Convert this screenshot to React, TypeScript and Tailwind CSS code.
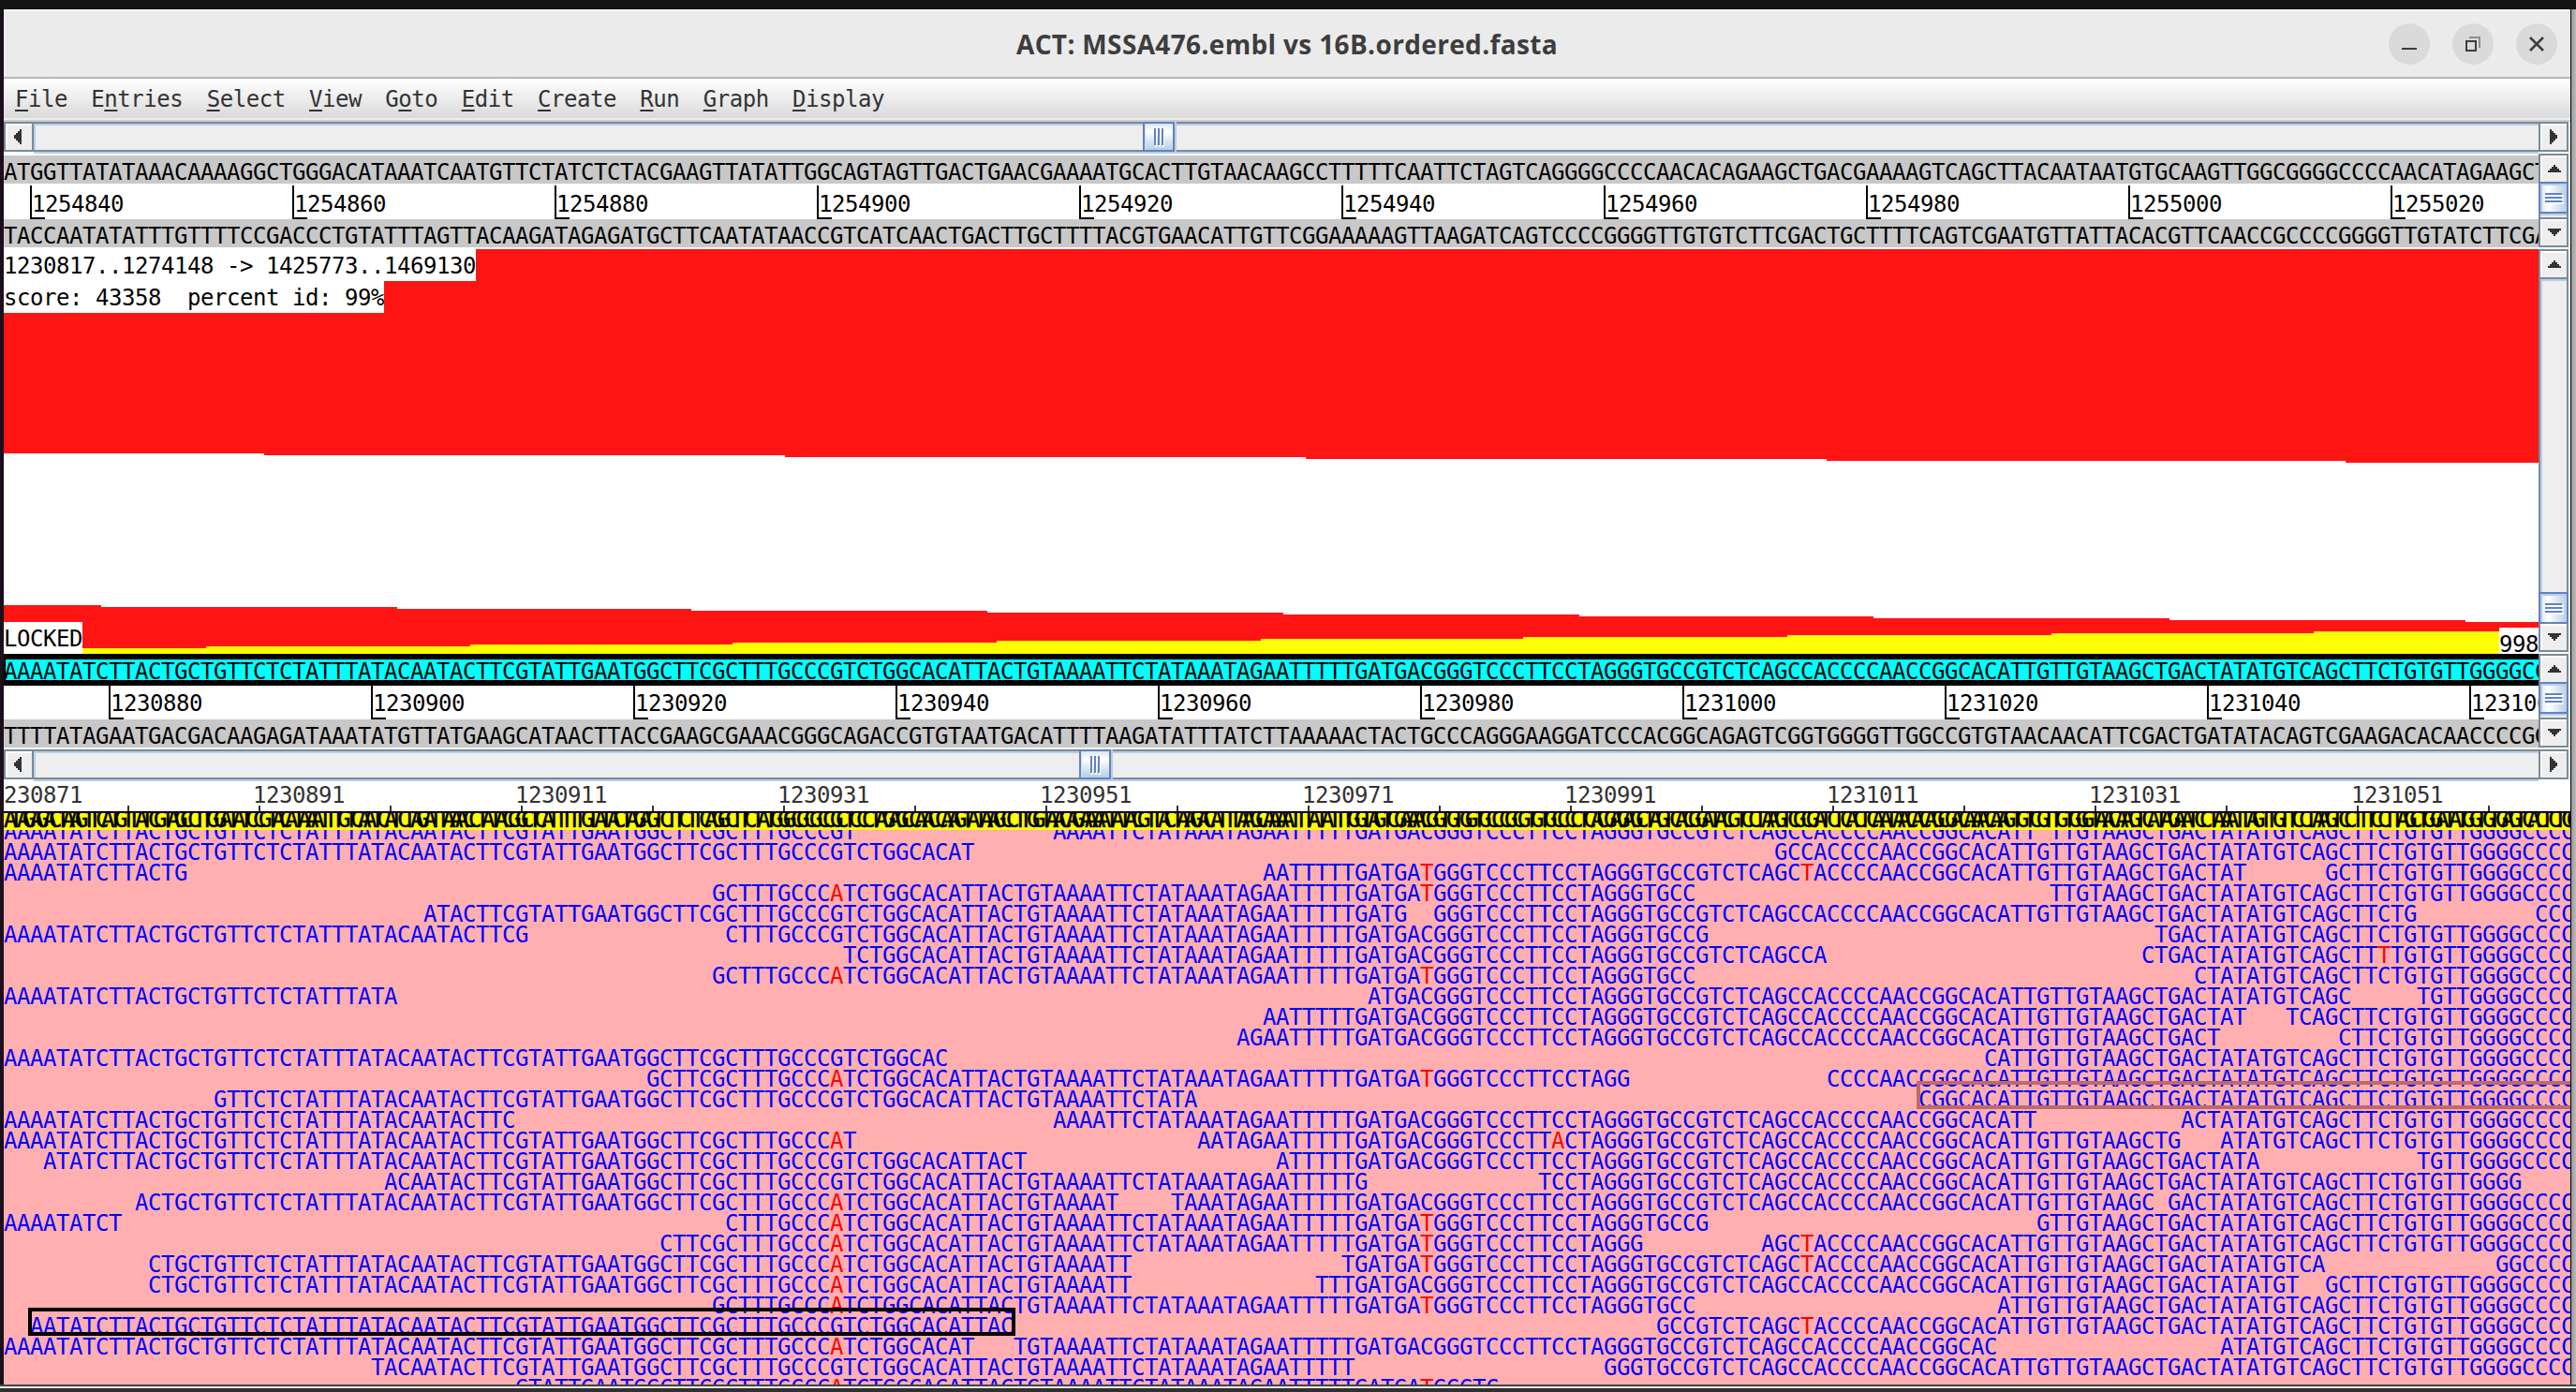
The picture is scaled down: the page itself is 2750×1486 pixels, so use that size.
import React from "react";

const MONO = "font-['DejaVu_Sans_Mono',monospace] text-[24px] tracking-[-0.449px] whitespace-pre";

const TOP_SEQ = [
  "ATGGTTATAT", "AAACAAAAGG", "CTGGGACATA", "AATCAATGTT", "CTATCTCTAC",
  "GAAGTTATAT", "TGGCAGTAGT", "TGACTGAACG", "AAAATGCACT", "TGTAACAAGC",
  "CTTTTTCAAT", "TCTAGTCAGG", "GGCCCCAACA", "CAGAAGCTGA", "CGAAAAGTCA",
  "GCTTACAATA", "ATGTGCAAGT", "TGGCGGGGCC", "CCAACATAGA", "AGCT",
].join("");

const REF_SEQ = [
  "AAAATATCTT", "ACTGCTGTTC", "TCTATTTATA", "CAATACTTCG", "TATTGAATGG",
  "CTTCGCTTTG", "CCCGTCTGGC", "ACATTACTGT", "AAAATTCTAT", "AAATAGAATT",
  "TTTGATGACG", "GGTCCCTTCC", "TAGGGTGCCG", "TCTCAGCCAC", "CCCAACCGGC",
  "ACATTGTTGT", "AAGCTGACTA", "TATGTCAGCT", "TCTGTGTTGG", "GGCCCC",
].join("");

const PAIR: Record<string, string> = { A: "T", T: "A", G: "C", C: "G" };
const complement = (s: string) => s.split("").map((c) => PAIR[c]).join("");

type Row = { reads: [number, number][]; snps?: Record<number, string> };

const ROWS: Row[] = [
  { reads: [[0, 65], [80, 155], [156, 196]] },
  { reads: [[0, 74], [135, 196]] },
  { reads: [[0, 14], [96, 171], [177, 196]], snps: { 108: "T", 137: "T" } },
  { reads: [[54, 129], [156, 196]], snps: { 63: "A", 108: "T" } },
  { reads: [[32, 107], [109, 184], [193, 196]] },
  { reads: [[0, 40], [55, 130], [164, 196]] },
  { reads: [[64, 139], [163, 196]], snps: { 181: "T" } },
  { reads: [[54, 129], [167, 196]], snps: { 63: "A", 108: "T" } },
  { reads: [[0, 30], [104, 179], [184, 196]] },
  { reads: [[96, 171], [174, 196]] },
  { reads: [[94, 169], [178, 196]] },
  { reads: [[0, 72], [151, 196]] },
  { reads: [[49, 124], [139, 196]], snps: { 63: "A", 108: "T" } },
  { reads: [[16, 91], [146, 196]] },
  { reads: [[0, 39], [80, 155], [166, 196]] },
  { reads: [[0, 65], [91, 166], [169, 196]], snps: { 63: "A", 118: "A" } },
  { reads: [[3, 78], [97, 172], [184, 196]] },
  { reads: [[29, 104], [117, 192]] },
  { reads: [[10, 85], [89, 164], [165, 196]], snps: { 63: "A" } },
  { reads: [[0, 9], [55, 130], [155, 196]], snps: { 63: "A", 108: "T" } },
  { reads: [[50, 125], [134, 196]], snps: { 63: "A", 108: "T", 137: "T" } },
  { reads: [[11, 86], [102, 177], [190, 196]], snps: { 63: "A", 108: "T", 137: "T" } },
  { reads: [[11, 86], [100, 175], [177, 196]], snps: { 63: "A" } },
  { reads: [[54, 129], [152, 196]], snps: { 63: "A", 108: "T" } },
  { reads: [[2, 77], [126, 196]], snps: { 137: "T" } },
  { reads: [[0, 74], [77, 152], [169, 196]], snps: { 63: "A" } },
  { reads: [[28, 103], [122, 196]] },
  { reads: [[39, 114]], snps: { 63: "A", 108: "T" } },
];

function ReadRow({ row }: { row: Row }) {
  const parts: { text: string; red: boolean }[] = [];
  for (let i = 0; i < 196; i++) {
    const covered = row.reads.some(([a, b]) => i >= a && i < b);
    const snp = covered ? row.snps?.[i] : undefined;
    const ch = covered ? snp ?? REF_SEQ[i] : " ";
    const last = parts[parts.length - 1];
    if (last && last.red === !!snp) last.text += ch;
    else parts.push({ text: ch, red: !!snp });
  }
  return (
    <div className="h-[22px] leading-[22px]">
      {parts.map((p, i) => (
        <span key={i} className={p.red ? "text-[#ff0000]" : undefined}>{p.text}</span>
      ))}
    </div>
  );
}

const MENUS: [string, number][] = [
  ["File", 0], ["Entries", 1], ["Select", 0], ["View", 0], ["Goto", 1],
  ["Edit", 0], ["Create", 0], ["Run", 0], ["Graph", 0], ["Display", 0],
];

function Arrow({ dir }: { dir: "left" | "right" | "up" | "down" }) {
  if (dir === "left" || dir === "right") {
    return (
      <svg width="8" height="16" viewBox="0 0 8 16" fill="#333" className={dir === "right" ? "-scale-x-100" : undefined} shapeRendering="crispEdges">
        <path d="M8 0V16H6V14H4V12H2V10H0V6H2V4H4V2H6V0Z" />
      </svg>
    );
  }
  return (
    <svg width="14" height="8" viewBox="0 0 14 8" fill="#333" className={dir === "down" ? "-scale-y-100" : undefined} shapeRendering="crispEdges">
      <path d="M6 0H8V2H10V4H12V6H14V8H0V6H2V4H4V2H6Z" />
    </svg>
  );
}

function HScroll({ thumb }: { thumb: string }) {
  return (
    <div className="flex h-[34px] w-[2740px] shrink-0 bg-white">
      <div className="flex h-[32px] w-[32px] items-center border-x-2 border-y-2 border-[#7a8a99] bg-[#eee] pl-[9px] shadow-[inset_2px_2px_0_#fff]">
        <Arrow dir="left" />
      </div>
      <div className="h-[34px] flex-1 border-b-2 border-[#b8cfe5]">
        <div className="h-[32px] border-y-2 border-[#7a8a99] bg-[#eee] shadow-[inset_2px_2px_0_#b8cfe5]">
          <div className={`${thumb} relative -top-[2px] flex h-[32px] w-[34px] items-center justify-center gap-[2px] border-2 border-[#6382bf] bg-linear-to-b from-[#dbe7f3] via-white via-30% to-[#b8cfe5] shadow-[2px_0_0_#b8cfe5,inset_1px_1px_0_#cfe0f0]`}>
            <i className="h-[18px] w-[2px] bg-[#6382bf] shadow-[1px_2px_0_#fff]" />
            <i className="h-[18px] w-[2px] bg-[#6382bf] shadow-[1px_2px_0_#fff]" />
            <i className="h-[18px] w-[2px] bg-[#6382bf] shadow-[1px_2px_0_#fff]" />
          </div>
        </div>
      </div>
      <div className="flex h-[32px] w-[32px] items-center border-2 border-[#7a8a99] bg-[#eee] pl-[10px] shadow-[inset_2px_2px_0_#fff]">
        <Arrow dir="right" />
      </div>
      <div className="w-[2px] bg-white" />
    </div>
  );
}

function VThumb() {
  return (
    <div className="flex h-[34px] w-[32px] shrink-0 flex-col items-center justify-center gap-[2px] border-2 border-[#6382bf] bg-linear-to-r from-[#dbe7f3] via-white via-30% to-[#b8cfe5] shadow-[inset_2px_2px_0_#b8cfe5]">
      <i className="h-[2px] w-[18px] bg-[#6382bf] shadow-[2px_2px_0_#fff]" />
      <i className="h-[2px] w-[18px] bg-[#6382bf] shadow-[2px_2px_0_#fff]" />
      <i className="h-[2px] w-[18px] bg-[#6382bf] shadow-[2px_2px_0_#fff]" />
    </div>
  );
}

function VScroll({ tall = false }: { tall?: boolean }) {
  return (
    <div className="flex w-[34px] shrink-0 flex-col bg-white pb-[2px]">
      <div className={`${tall ? "h-[32px] border-b-2" : "h-[30px]"} flex w-[32px] shrink-0 items-center justify-center border-x-2 border-t-2 border-[#7a8a99] bg-[#eee] pl-[2px] shadow-[inset_2px_2px_0_#fff]`}>
        <Arrow dir="up" />
      </div>
      {tall && <div className="w-[32px] flex-1 border-x-2 border-[#7a8a99] bg-[#eee] shadow-[inset_2px_2px_0_#b8cfe5]" />}
      <VThumb />
      {!tall && (
        <div className="h-[4px] w-[32px] shrink-0 border-x-2 border-[#7a8a99] bg-[#eee] shadow-[inset_0_2px_0_#b8cfe5]" />
      )}
      <div className={`${tall ? "h-[30px]" : "h-[32px] border-t-2"} flex w-[32px] shrink-0 items-center justify-center border-x-2 border-b-2 border-[#7a8a99] bg-[#eee] pl-[2px] shadow-[inset_2px_2px_0_#fff]`}>
        <Arrow dir="down" />
      </div>
    </div>
  );
}

function Ruler({ values, lead, className }: { values: number[]; lead: string; className: string }) {
  return (
    <div className={`flex w-full overflow-hidden bg-white ${lead} ${className}`}>
      {values.map((v) => (
        <div key={v} className="flex h-full w-[280px] shrink-0 flex-col border-l-2 border-black">
          <span className="h-0 flex-1">{v}</span>
          <span className="h-[2px] w-[14px] shrink-0 bg-black" />
        </div>
      ))}
    </div>
  );
}

const steps = (from: number, count: number, step: number) =>
  Array.from({ length: count }, (_, i) => from + i * step);

export default function App() {
  return (
    <div className={`flex h-[1486px] w-[2750px] flex-col overflow-hidden bg-[#131313] text-black ${MONO}`}>
      <div className="h-[10px] shrink-0 bg-[#131313]" />
      <div className="flex h-[1468px] shrink-0">
        <div className="w-[4px] shrink-0 bg-[#1c0f1c]" />
        <main className="flex w-[2740px] shrink-0 flex-col overflow-hidden bg-white">
          <header className="grid h-[74px] shrink-0 grid-cols-[1fr_auto_1fr] items-center border-t-2 border-b-2 border-t-white border-b-[#b8b8b8] bg-[#ebebeb]">
            <div />
            <h1 className="font-['Open_Sans','Noto_Sans',sans-serif] text-[28px] font-bold tracking-[0.35px] text-[#3d3d3d]">
              ACT: MSSA476.embl vs 16B.ordered.fasta
            </h1>
            <div className="flex justify-end gap-[24px] pr-[14px]">
              <div className="flex size-[44px] items-end justify-center rounded-full bg-[#dadada] pb-[16px]">
                <div className="h-[2px] w-[16px] bg-[#3d3d3d]" />
              </div>
              <div className="flex size-[44px] items-center justify-center rounded-full bg-[#dadada]">
                <svg width="16" height="16" viewBox="0 0 16 16" fill="none" strokeWidth="2">
                  <rect x="1" y="5" width="10" height="10" stroke="#3d3d3d" />
                  <path d="M4 1H15V12" stroke="#8e8e8e" />
                </svg>
              </div>
              <div className="flex size-[44px] items-center justify-center rounded-full bg-[#dadada]">
                <svg width="16" height="16" viewBox="0 0 16 16" stroke="#3d3d3d" strokeWidth="2.6">
                  <path d="M1 1L15 15M15 1L1 15" />
                </svg>
              </div>
            </div>
          </header>

          <nav className="flex h-[42px] shrink-0 gap-[25.3px] bg-linear-to-b from-white to-[#dadada] pl-[12px] leading-[44px] text-[#333]">
            {MENUS.map(([label, at]) => (
              <span key={label}>
                {label.slice(0, at)}
                <span className="underline decoration-2 underline-offset-[3px] [text-decoration-skip-ink:none]">{label[at]}</span>
                {label.slice(at + 1)}
              </span>
            ))}
          </nav>
          <div className="h-[4px] shrink-0 border-b-2 border-[#ccc] bg-[#eee]" />

          <HScroll thumb="ml-[1184px]" />

          <section className="flex h-[102px] shrink-0">
            <div className="flex w-[2706px] flex-col overflow-hidden pt-[2px]">
              <div className="h-[30px] shrink-0 overflow-hidden bg-[#c8c8c8] leading-[36px]">{TOP_SEQ}</div>
              <Ruler values={steps(1254840, 10, 20)} lead="pl-[28px]" className="h-[38px] shrink-0 pt-[2px] leading-[40px]" />
              <div className="h-[30px] shrink-0 overflow-hidden bg-[#c8c8c8] leading-[36px]">{complement(TOP_SEQ)}</div>
            </div>
            <VScroll />
          </section>

          <section className="flex h-[432px] shrink-0">
            <div className="relative w-[2706px] overflow-hidden">
              <svg width="2706" height="432" viewBox="4 266 2706 432" shapeRendering="crispEdges" className="absolute inset-0">
                <path fill="#ff1414" d="M4 266H2710V494H2504V492H1950V490H1394V488H838V486H282V484H4Z" />
                <path fill="#ff1414" d="M4 646H108V648H424V650H738V652H1054V654H1370V656H1686V658H2000V660H2316V662H2632V664H2710V698H4Z" />
                <path fill="#ffff00" d="M4 692H220V690H502V688H782V686H1064V684H1346V682H1626V680H1908V678H2190V676H2470V674H2710V698H4Z" />
              </svg>
              <div className="relative flex h-full flex-col items-start leading-[36px]">
                <div className="h-[34px] w-[504px] overflow-hidden bg-white">1230817..1274148 -&gt; 1425773..1469130</div>
                <div className="h-[34px] w-[406px] overflow-hidden bg-white">score: 43358  percent id: 99%</div>
                <div className="mt-auto flex w-full items-end justify-between">
                  <div className="h-[34px] w-[84px] overflow-hidden bg-white">LOCKED</div>
                  <div className="h-[28px] w-[42px] bg-white">
                    <div className="w-[38px] leading-[36px]">998</div>
                  </div>
                </div>
              </div>
            </div>
            <VScroll tall />
          </section>

          <section className="flex h-[102px] shrink-0">
            <div className="flex w-[2706px] flex-col overflow-hidden">
              <div className="h-[34px] shrink-0 overflow-hidden border-t-[6px] border-b-[6px] border-black bg-[#00ffff] leading-[27px] shadow-[inset_2px_0_0_#000]">{REF_SEQ}</div>
              <Ruler values={steps(1230880, 10, 20)} lead="pl-[112px]" className="h-[36px] shrink-0 leading-[39px]" />
              <div className="h-[30px] shrink-0 overflow-hidden bg-[#c8c8c8] leading-[36px]">{complement(REF_SEQ)}</div>
            </div>
            <VScroll />
          </section>

          <HScroll thumb="ml-[1116px]" />

          <div className="flex h-[26px] shrink-0 overflow-hidden bg-white leading-[31px] text-[#333]">
            {steps(1230871, 10, 20).map((v, i) => (
              <span key={v} className={`${i === 0 ? "-ml-[14px]" : ""} w-[280px] shrink-0`}>{v}</span>
            ))}
          </div>
          <div className="flex h-[6px] shrink-0 overflow-hidden bg-white pl-[132px]">
            {steps(0, 19, 1).map((k) => (
              <div key={k} className="w-[140px] shrink-0 border-l-2 border-[#333]" />
            ))}
          </div>
          <div className="relative h-[20px] shrink-0 overflow-hidden border-t-2 border-black bg-[#ffff00] leading-[15px] [-webkit-text-stroke:0.5px_black]">
            {REF_SEQ}
            <span aria-hidden className="absolute top-0 left-[6px]">{TOP_SEQ.slice(60) + TOP_SEQ.slice(0, 70)}</span>
          </div>

          <section className="relative min-h-0 flex-1 overflow-hidden bg-[#ffafaf] text-[#0000ff]">
            <div className="-mt-[9px]">
              {ROWS.map((row, i) => <ReadRow key={i} row={row} />)}
            </div>
            <div className="absolute top-[268px] left-[2042px] h-[30px] w-[720px] border-4 border-[#bf6a6a]" />
            <div className="absolute top-[510px] left-[26px] h-[30px] w-[1054px] border-4 border-black" />
          </section>
        </main>
        <div className="w-[6px] shrink-0 border-l border-black bg-linear-to-r from-[#999] to-[#bbb]" />
      </div>
      <div className="h-[2px] shrink-0 bg-[#444]" />
      <div className="h-[2px] shrink-0 bg-[#e8e8ea]" />
      <div className="flex-1 bg-[#303030]" />
    </div>
  );
}
